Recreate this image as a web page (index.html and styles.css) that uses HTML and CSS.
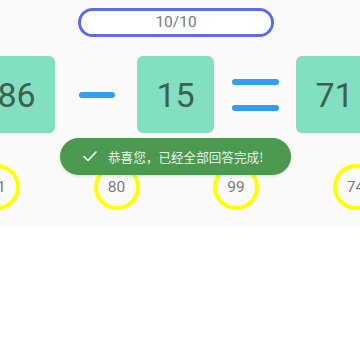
FILE: index.html
```html
<!DOCTYPE html>
<html>
<head>
<meta charset="utf-8">
<link rel="stylesheet" href="styles.css">
</head>
<body>
<div class="stage">
  <div class="progress">10/10</div>
  <div class="equation">
    <div class="box">86</div>
    <div class="slot"><span class="minus"></span></div>
    <div class="box">15</div>
    <div class="slot"><span class="equals"><i></i><i></i></span></div>
    <div class="box">71</div>
  </div>
  <div class="choices">
    <div class="ring">71</div>
    <div class="ring">80</div>
    <div class="ring">99</div>
    <div class="ring">74</div>
  </div>
  <div class="toast">
    <svg class="check" width="14" height="11" viewBox="0 0 14 11"><path d="M1 5.5 L5 9.5 L13 1" fill="none" stroke="#fff" stroke-width="1.6" stroke-linecap="round" stroke-linejoin="round"/></svg>
    <span class="msg">恭喜您，已经全部回答完成!</span>
  </div>
</div>
</body>
</html>
```
FILE: styles.css
```css
html, body {
  margin: 0;
  padding: 0;
  background: #ffffff;
}
.stage {
  position: relative;
  height: 226px;
  background: #fafafa;
  overflow: hidden;
  font-family: Roboto, "Noto Sans", "Noto Sans CJK SC", sans-serif;
}
.progress {
  box-sizing: border-box;
  margin: 8px 0 0 78px;
  width: 196px;
  height: 29px;
  border: 3px solid #5b6cf0;
  border-radius: 15px;
  background: #ffffff;
  color: #7a7a7a;
  font-size: 15.5px;
  line-height: 23px;
  text-align: center;
}
.equation {
  display: flex;
  margin: 19px 0 0 -22px;
  height: 77px;
}
.box {
  flex: none;
  width: 77px;
  height: 77px;
  border-radius: 6px;
  background: #82dfc0;
  color: #3f5f4f;
  font-size: 34px;
  display: flex;
  align-items: center;
  justify-content: center;
}
.slot {
  flex: none;
  width: 82px;
  display: flex;
  align-items: center;
  justify-content: center;
}
.minus {
  display: block;
  width: 36px;
  height: 6px;
  border-radius: 3px;
  background: #2f9ff5;
  margin-left: 2px;
}
.equals {
  display: flex;
  flex-direction: column;
  gap: 20px;
}
.equals i {
  display: block;
  width: 47px;
  height: 6px;
  border-radius: 3px;
  background: #2f9ff5;
}
.choices {
  display: flex;
  gap: 73.5px;
  margin: 31px 0 0 -26px;
}
.ring {
  flex: none;
  box-sizing: border-box;
  width: 46px;
  height: 46px;
  border: 4px solid #ffff00;
  border-radius: 50%;
  color: #7a7a7a;
  font-size: 15.5px;
  display: flex;
  align-items: center;
  justify-content: center;
}
.toast {
  position: absolute;
  left: 60px;
  top: 138px;
  width: 231px;
  height: 37px;
  border-radius: 18.5px;
  background: #4b9a4f;
  box-shadow: 0 1px 3px rgba(0,0,0,0.15);
  display: flex;
  align-items: center;
  box-sizing: border-box;
  padding-left: 23px;
  color: rgba(255,255,255,0.9);
  font-size: 12.6px;
  font-family: "Noto Sans CJK SC", sans-serif;
}
.check {
  flex: none;
  margin-right: 11px;
}
.msg {
  white-space: nowrap;
}
```
